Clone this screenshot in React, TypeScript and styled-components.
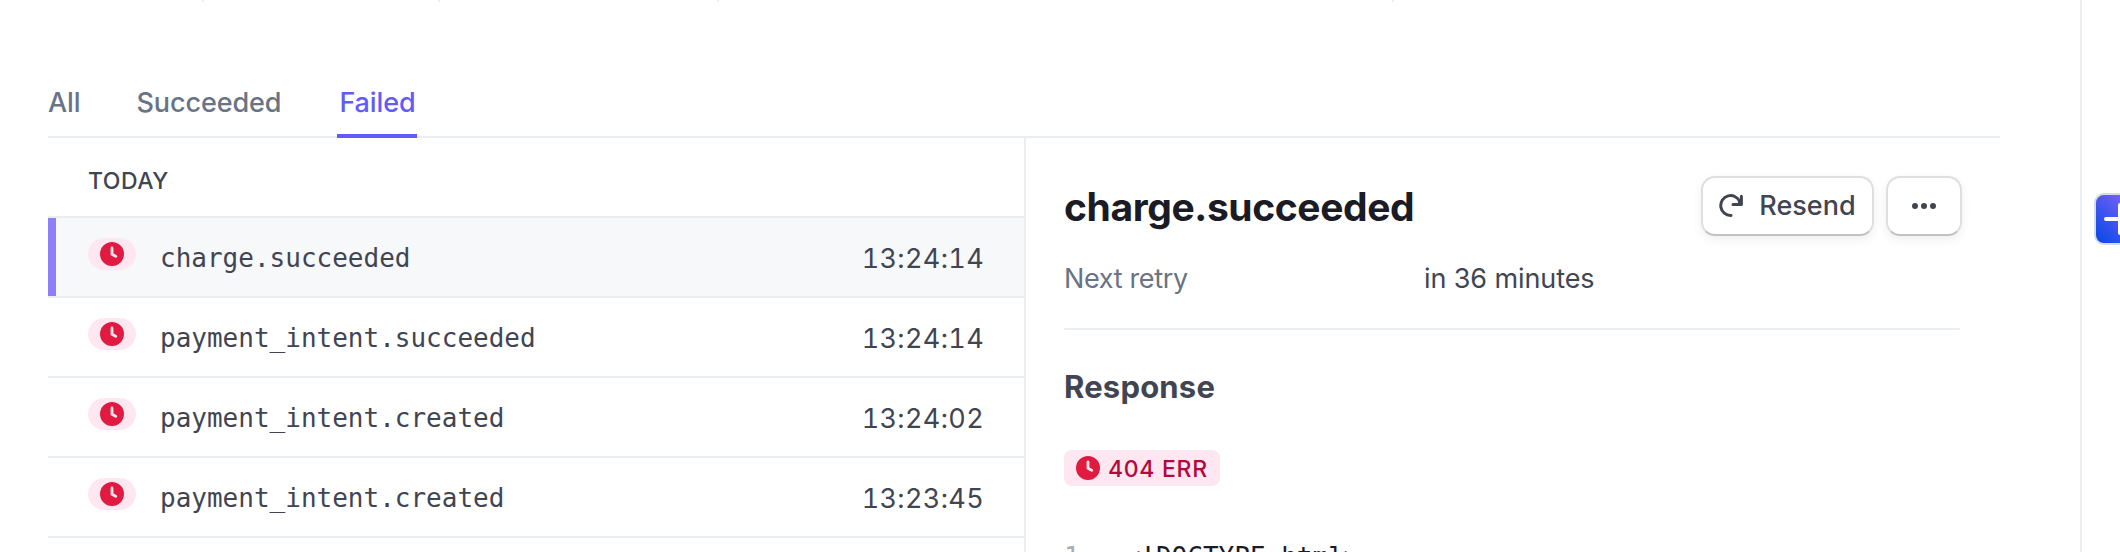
import React from "react";
import styled, { createGlobalStyle } from "styled-components";

const Global = createGlobalStyle`
  * { box-sizing: border-box; }
  body { margin: 0; background: #fff; color: #414552; font-family: Inter, "Liberation Sans", sans-serif; overflow: hidden; }
`;

const Page = styled.div`
  display: flex;
  height: 552px;
  width: 2120px;
  overflow: hidden;
`;

const Main = styled.main`
  width: 2080px;
  flex: none;
  padding: 0 80px 0 48px;
  display: flex;
  flex-direction: column;
`;

const Ticks = styled.div`
  display: flex;
  height: 2px;
  flex: none;
`;

const Tick = styled.span<{ $gap: number }>`
  width: 2px;
  height: 2px;
  margin-left: ${(p) => p.$gap}px;
  background: #ebeef1;
`;

const Tabs = styled.nav`
  display: flex;
  height: 136px;
  flex: none;
  align-items: flex-end;
  gap: 54px;
  border-bottom: 2px solid #ebeef1;
`;

const Tab = styled.a<{ $active?: boolean }>`
  height: 58px;
  margin-bottom: -2px;
  padding: 7px ${(p) => (p.$active ? "1px 0 2px" : "2px 0 0")};
  font-size: 27px;
  line-height: 32px;
  font-weight: 500;
  letter-spacing: -0.1px;
  color: ${(p) => (p.$active ? "#625afa" : "#687385")};
  border-bottom: 4px solid ${(p) => (p.$active ? "#625afa" : "transparent")};
`;

const Split = styled.div`
  display: flex;
  flex: 1;
  min-height: 0;
`;

const List = styled.section`
  width: 978px;
  flex: none;
  border-right: 2px solid #ebeef1;
`;

const DayHeading = styled.h3`
  margin: 0;
  height: 80px;
  padding: 28px 0 0 40px;
  border-bottom: 2px solid #ebeef1;
  font-size: 23px;
  line-height: 30px;
  font-weight: 500;
  letter-spacing: 0.5px;
`;

const Row = styled.div<{ $selected?: boolean }>`
  display: flex;
  height: 80px;
  padding: 0 40px;
  border-bottom: 2px solid #ebeef1;
  ${(p) => p.$selected && "background: linear-gradient(90deg, #8d7ffa 8px, #f6f8fa 8px);"}
`;

const StatusPill = styled.span`
  display: flex;
  align-items: center;
  justify-content: center;
  width: 48px;
  height: 32px;
  margin: 20px 24px 0 0;
  border-radius: 16px;
  background: #ffe7f2;
`;

const EventName = styled.span`
  flex: 1;
  padding-top: 22px;
  font-family: "DejaVu Sans Mono", monospace;
  font-size: 26px;
  line-height: 36px;
`;

const Time = styled.time`
  padding-top: 23px;
  font-size: 27px;
  line-height: 36px;
  font-variant-numeric: tabular-nums;
  letter-spacing: 0.35px;
`;

const Detail = styled.section`
  flex: 1;
  padding: 38px 40px 0 38px;
`;

const DetailHeader = styled.header`
  display: flex;
  align-items: center;
  height: 60px;
  gap: 12px;
  margin-right: -2px;
`;

const Title = styled.h2`
  flex: 1;
  margin: 2px 0 0;
  font-size: 39px;
  line-height: 48px;
  font-weight: 700;
  letter-spacing: -0.4px;
  color: #1a1b25;
`;

const Button = styled.button<{ $width: number }>`
  display: flex;
  align-items: center;
  justify-content: center;
  gap: 16px;
  width: ${(p) => p.$width}px;
  height: 60px;
  padding: 0;
  border: 2px solid #dfdfdf;
  border-bottom-color: #c2c2c3;
  border-radius: 14px;
  background: #fff;
  color: #414552;
  font: 500 27px/32px Inter, sans-serif;
  box-shadow: 0 4px 10px rgba(60, 66, 87, 0.08);
`;

const Meta = styled.dl`
  display: grid;
  grid-template-columns: 360px 1fr;
  height: 94px;
  margin: 0;
  padding-top: 25px;
  border-bottom: 2px solid #ebeef1;
  font-size: 27px;
  line-height: 36px;
`;

const Term = styled.dt`
  color: #687385;
  letter-spacing: -0.35px;
`;

const Value = styled.dd`
  margin: 0;
  letter-spacing: -0.1px;
`;

const Subtitle = styled.h3`
  margin: 37px 0 0;
  font-size: 31px;
  line-height: 40px;
  font-weight: 700;
  letter-spacing: 0.2px;
`;

const ErrorBadge = styled.span`
  display: flex;
  align-items: center;
  gap: 8px;
  width: 156px;
  height: 36px;
  margin-top: 43px;
  padding-left: 12px;
  border-radius: 8px;
  background: #ffe7f2;
`;

const BadgeText = styled.span`
  padding-top: 2px;
  color: #b3093c;
  font-size: 23px;
  line-height: 28px;
  font-weight: 500;
  letter-spacing: 0.7px;
`;

const Code = styled.pre`
  display: flex;
  gap: 45px;
  margin: 56px 0 0;
  font-family: "DejaVu Sans Mono", monospace;
  font-size: 26px;
  line-height: 30px;
  color: #1a1b25;
`;

const LineNumber = styled.span`
  color: #a3acba;
`;

const Rail = styled.aside`
  flex: none;
  width: 40px;
  border-left: 2px solid #ebeef1;
  padding: 193px 0 0 12px;
`;

const ClockIcon = () => (
  <svg width="24" height="24" viewBox="0 0 24 24" fill="none">
    <circle cx="12" cy="12" r="12" fill="#df1b41" />
    <path d="M12 6V12.2L15.8 14.4" stroke="#ffe7f2" strokeWidth="2.8" strokeLinecap="round" strokeLinejoin="round" />
  </svg>
);

const ResendIcon = () => (
  <svg width="24" height="24" viewBox="0 0 24 24" fill="none" stroke="currentColor" strokeWidth="3" strokeLinecap="round" strokeLinejoin="round">
    <path d="M12 21.4A9.9 9.9 0 1 1 20.9 8" />
    <path d="M22.4 2.2V10.4H14" />
    <path d="M20 7L22 10H19.5Z" fill="currentColor" strokeWidth="1" />
  </svg>
);

const MoreIcon = () => (
  <svg width="24" height="24" viewBox="0 0 24 24" fill="currentColor">
    <circle cx="3" cy="12" r="3" />
    <circle cx="12" cy="12" r="3" />
    <circle cx="21" cy="12" r="3" />
  </svg>
);

const AddIcon = () => (
  <svg width="52" height="52" viewBox="0 0 52 52" fill="none">
    <defs>
      <linearGradient id="add" x1="0" y1="1" x2="1" y2="0">
        <stop offset="0" stopColor="#0048e5" />
        <stop offset="1" stopColor="#9b66ff" />
      </linearGradient>
    </defs>
    <rect x="1" y="1" width="50" height="50" rx="9" fill="url(#add)" stroke="#d5dbe1" strokeWidth="2" />
    <path d="M12 26H40M26 12V40" stroke="#fff" strokeWidth="4" strokeLinecap="round" />
  </svg>
);

const events = [
  { name: "charge.succeeded", time: "13:24:14" },
  { name: "payment_intent.succeeded", time: "13:24:14" },
  { name: "payment_intent.created", time: "13:24:02" },
  { name: "payment_intent.created", time: "13:23:45" },
];

const columnGaps = [154, 234, 277, 673];

export default function App() {
  return (
    <Page>
      <Global />
      <Main>
        <Ticks>
          {columnGaps.map((gap) => (
            <Tick key={gap} $gap={gap} />
          ))}
        </Ticks>
        <Tabs>
          <Tab>All</Tab>
          <Tab>Succeeded</Tab>
          <Tab $active>Failed</Tab>
        </Tabs>
        <Split>
          <List>
            <DayHeading>TODAY</DayHeading>
            {events.map((event, i) => (
              <Row key={i} $selected={i === 0}>
                <StatusPill>
                  <ClockIcon />
                </StatusPill>
                <EventName>{event.name}</EventName>
                <Time>{event.time}</Time>
              </Row>
            ))}
          </List>
          <Detail>
            <DetailHeader>
              <Title>charge.succeeded</Title>
              <Button $width={173}>
                <ResendIcon />
                Resend
              </Button>
              <Button $width={76} aria-label="More">
                <MoreIcon />
              </Button>
            </DetailHeader>
            <Meta>
              <Term>Next retry</Term>
              <Value>in 36 minutes</Value>
            </Meta>
            <Subtitle>Response</Subtitle>
            <ErrorBadge>
              <ClockIcon />
              <BadgeText>404 ERR</BadgeText>
            </ErrorBadge>
            <Code>
              <LineNumber>1</LineNumber>
              <span>{"<!DOCTYPE html>"}</span>
            </Code>
          </Detail>
        </Split>
      </Main>
      <Rail>
        <AddIcon />
      </Rail>
    </Page>
  );
}
